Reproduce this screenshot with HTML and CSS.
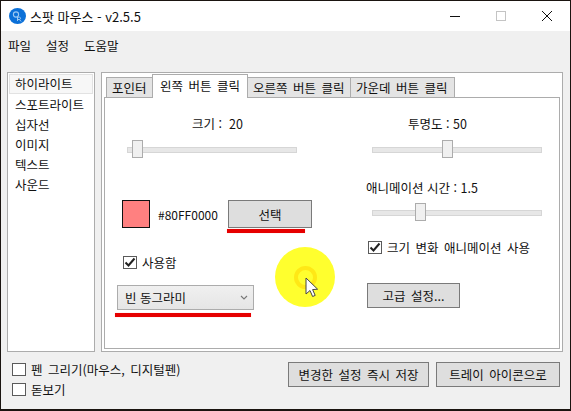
FILE: index.html
```html
<!DOCTYPE html>
<html lang="ko">
  <head>
    <meta charset="UTF-8" />
    <meta name="viewport" content="width=device-width, initial-scale=1.0" />
    <title>스팟 마우스</title>
    <link rel="stylesheet" href="styles.css">
  </head>
  <body>
    <div class="window">
      <header class="titlebar">
        <svg class="app-icon" width="17" height="16" viewBox="0 0 17 16">
          <ellipse cx="8.5" cy="8" rx="8.5" ry="8" fill="#0b70d8" />
          <circle cx="7" cy="6.5" r="2.6" fill="none" stroke="#9cc8f2" stroke-width="1.1" />
          <path d="M8.5 9v4M8.5 9.2h2.2a1.2 1.2 0 0 1 0 2.3H8.5M10.5 11.5l1.6 2" fill="none" stroke="#9cc8f2" stroke-width="1" />
        </svg>
        <span class="app-title">스팟 마우스 - v2.5.5</span>
        <div class="window-controls">
          <span class="win-btn"><i class="icon-min"></i></span>
          <span class="win-btn"><i class="icon-max"></i></span>
          <span class="win-btn">
            <svg width="12" height="12" viewBox="0 0 12 12">
              <path d="M1 1l10 10M11 1L1 11" stroke="#111" stroke-width="1" fill="none" />
            </svg>
          </span>
        </div>
      </header>

      <nav class="menubar">
        <span>파일</span>
        <span>설정</span>
        <span>도움말</span>
      </nav>

      <main class="main">
        <ul class="side-list">
          <li class="selected">하이라이트</li>
          <li>스포트라이트</li>
          <li>십자선</li>
          <li>이미지</li>
          <li>텍스트</li>
          <li>사운드</li>
        </ul>

        <section class="panel">
          <div class="tabs">
            <span class="tab tab-first">포인터</span>
            <span class="tab active">왼쪽 버튼 클릭</span>
            <span class="tab">오른쪽 버튼 클릭</span>
            <span class="tab">가운데 버튼 클릭</span>
          </div>

          <div class="tab-page">
            <div class="col-left">
              <div class="label label-size">크기 :&nbsp; 20</div>
              <div class="slider slider-left"><i class="thumb" style="left: 5px"></i></div>

              <div class="color-row">
                <span class="swatch"></span>
                <span class="color-code">#80FF0000</span>
                <button class="btn btn-select" type="button">선택</button>
              </div>

              <label class="check check-use">
                <span class="box checked">
                  <svg width="12" height="11" viewBox="0 0 12 11">
                    <path d="M1.5 5.5l3 3 6-7" fill="none" stroke="#222" stroke-width="2" />
                  </svg>
                </span>
                사용함
              </label>

              <div class="combo">
                <span>빈 동그라미</span>
                <svg width="8" height="5" viewBox="0 0 8 5">
                  <path d="M1 1l3 3 3-3" fill="none" stroke="#777" stroke-width="1.1" />
                </svg>
              </div>
            </div>

            <div class="col-right">
              <div class="label label-alpha">투명도 : 50</div>
              <div class="slider"><i class="thumb" style="left: 70px"></i></div>

              <div class="label label-time">애니메이션 시간 : 1.5</div>
              <div class="slider slider-time"><i class="thumb" style="left: 43px"></i></div>

              <label class="check check-anim">
                <span class="box checked">
                  <svg width="12" height="11" viewBox="0 0 12 11">
                    <path d="M1.5 5.5l3 3 6-7" fill="none" stroke="#222" stroke-width="2" />
                  </svg>
                </span>
                크기 변화 애니메이션 사용
              </label>

              <button class="btn btn-advanced" type="button">고급 설정...</button>
            </div>
          </div>
        </section>
      </main>

      <footer class="footer">
        <div class="footer-checks">
          <label class="check"><span class="box"></span>펜 그리기(마우스, 디지털펜)</label>
          <label class="check"><span class="box"></span>돋보기</label>
        </div>
        <div class="footer-buttons">
          <button class="btn btn-save" type="button">변경한 설정 즉시 저장</button>
          <button class="btn btn-tray" type="button">트레이 아이콘으로</button>
        </div>
      </footer>

      <!-- annotations drawn over the window -->
      <span class="mark mark-select"></span>
      <span class="mark mark-combo"></span>
      <div class="highlight"><i></i></div>
      <svg class="cursor" width="14" height="22" viewBox="0 0 14 22">
        <path d="M1 1v16l4-3.5 2.6 6 2.6-1.1-2.6-5.8 5-.4z" fill="#fff" stroke="#444" stroke-width="1" />
      </svg>
    </div>
  </body>
</html>
```

FILE: styles.css
```css
* {
  box-sizing: border-box;
}

body {
  margin: 0;
  background-color: #1a1410;
  font-family: "Noto Sans CJK KR", "Noto Sans", sans-serif;
  font-size: 12.5px;
  word-spacing: 2px;
  color: #111;
}

.window {
  position: relative;
  width: 569px;
  height: 408px;
  margin: 1px 1px 2px;
  background-color: #f0f0f0;
}

.titlebar {
  display: flex;
  align-items: center;
  height: 30px;
  padding-left: 8px;
  background-color: #fff;
}

.app-icon {
  flex: none;
}

.app-title {
  margin-left: 4px;
  font-size: 13px;
  word-spacing: 0;
}

.window-controls {
  display: flex;
  margin-left: auto;
}

.win-btn {
  display: flex;
  align-items: center;
  justify-content: center;
  width: 46px;
  height: 30px;
}

.icon-min {
  width: 10px;
  height: 1px;
  background-color: #111;
}

.icon-max {
  width: 10px;
  height: 10px;
  border: 1px solid #c4c4c4;
}

.menubar {
  display: flex;
  gap: 15px;
  height: 41px;
  padding: 5px 0 0 7px;
}

.main {
  display: flex;
  gap: 6px;
  height: 280px;
  padding: 0 7px 0 6px;
}

.side-list {
  width: 88px;
  margin: 0;
  padding: 1px;
  border: 1px solid #acacac;
  background-color: #fff;
  list-style: none;
}

.side-list li {
  height: 20px;
  padding-left: 6px;
  line-height: 21px;
}

.side-list .selected {
  border: 1px solid #e2e2e2;
  background-color: #f7f7f7;
  padding-left: 5px;
  line-height: 17px;
}

.panel {
  flex: 1;
  padding: 2px 2px 2px 2px;
  border: 1px solid #acacac;
  background-color: #fff;
}

.tabs {
  display: flex;
  align-items: flex-end;
  height: 23px;
  padding-left: 2px;
  margin-bottom: -1px;
}

.tab {
  position: relative;
  height: 21px;
  padding: 0 5px;
  border: 1px solid #acacac;
  border-left-width: 0;
  background-color: #e4e4e4;
  line-height: 19px;
  white-space: nowrap;
}

.tab-first {
  width: 47px;
  border-left-width: 1px;
}

.active {
  width: 96px;
  height: 24px;
  margin-left: -1px;
  border-left-width: 1px;
  border-bottom: 0;
  background-color: #fff;
  line-height: 21px;
  text-align: center;
  z-index: 1;
}

.tab:nth-child(3) {
  width: 103px;
}

.tab:nth-child(4) {
  width: 104px;
}

.tab-page {
  display: grid;
  grid-template-columns: 262px 1fr;
  height: 252px;
  border: 1px solid #acacac;
  background-color: #fff;
}

.label {
  height: 16px;
  line-height: 16px;
  word-spacing: 0;
  white-space: nowrap;
}

.label-size {
  margin: 18px 0 0 87px;
}

.label-alpha {
  margin: 18px 0 0 41px;
}

.label-time {
  margin: 22px 0 0 -1px;
}

.slider {
  position: relative;
  width: 170px;
  height: 18px;
  margin: 8px 0 0 5px;
}

.slider::before {
  content: "";
  position: absolute;
  top: 7px;
  left: 0;
  right: 0;
  height: 4px;
  border: 1px solid #d6d6d6;
  background-color: #e7e7e7;
}

.slider-left {
  margin-left: 22px;
}

.slider-time {
  margin-top: 7px;
}

.thumb {
  position: absolute;
  top: 0;
  width: 11px;
  height: 18px;
  border: 1px solid #acacac;
  background-color: #f0f0f0;
}

.color-row {
  display: flex;
  align-items: center;
  height: 28px;
  margin: 42px 0 0 17px;
}

.swatch {
  width: 28px;
  height: 28px;
  border: 1px solid #111;
  background-color: #ff8080;
}

.color-code {
  margin-left: 8px;
  width: 70px;
  font-size: 12px;
}

.btn {
  border: 1px solid #7a7a7a;
  background-color: #dedede;
  padding: 0;
  font: inherit;
  word-spacing: inherit;
  color: #111;
}

.btn-select {
  width: 84px;
  height: 28px;
}

.check {
  display: flex;
  align-items: center;
  height: 13px;
  white-space: nowrap;
}

.box {
  display: flex;
  align-items: center;
  justify-content: center;
  flex: none;
  width: 14px;
  height: 13px;
  margin-right: 5px;
  border: 1px solid #5a5a5a;
  background-color: #fff;
}

.check-use {
  margin: 28px 0 0 18px;
}

.check-anim {
  margin: 20px 0 0 1px;
}

.combo {
  display: flex;
  align-items: center;
  justify-content: space-between;
  width: 137px;
  height: 25px;
  margin: 16px 0 0 12px;
  padding: 0 5px 0 7px;
  border: 1px solid #acacac;
  background: linear-gradient(#f0f0f0, #e5e5e5);
  word-spacing: 0;
}

.btn-advanced {
  display: block;
  width: 93px;
  height: 25px;
  margin-top: 29px;
}

.footer {
  display: flex;
  justify-content: space-between;
  padding: 10px 10px 0 11px;
}

.footer-checks {
  display: flex;
  flex-direction: column;
  gap: 7px;
  margin-top: 1px;
}

.footer-buttons {
  display: flex;
  gap: 7px;
}

.btn-save {
  width: 141px;
  height: 25px;
}

.btn-tray {
  width: 124px;
  height: 25px;
}

.mark {
  position: absolute;
  height: 4px;
  background-color: #e60000;
  box-shadow: 0 0 1px #f7a0a0;
}

.mark-select {
  top: 228px;
  left: 226px;
  width: 78px;
}

.mark-combo {
  top: 312px;
  left: 114px;
  width: 136px;
}

.highlight {
  position: absolute;
  top: 246px;
  left: 274px;
  display: flex;
  align-items: center;
  justify-content: center;
  width: 60px;
  height: 60px;
  border-radius: 50%;
  background-color: #ffff2e;
}

.highlight i {
  width: 23px;
  height: 23px;
  border: 4px solid #ffe816;
  border-radius: 50%;
}

.cursor {
  position: absolute;
  top: 276px;
  left: 304px;
}
```
